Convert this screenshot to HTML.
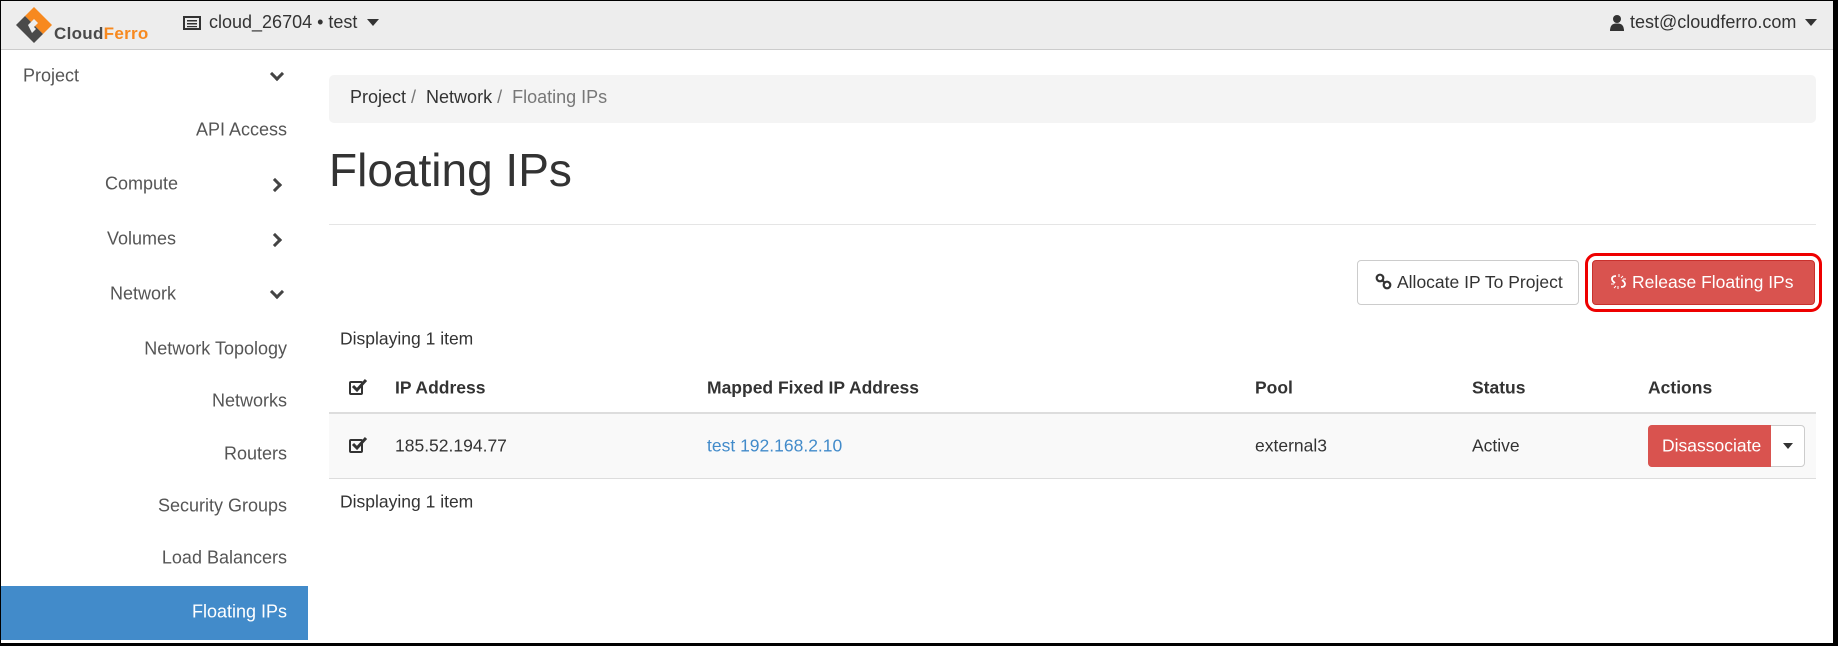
<!DOCTYPE html>
<html><head><meta charset="utf-8"><style>
*{margin:0;padding:0;box-sizing:border-box}
body{width:1838px;height:646px;overflow:hidden;background:#fff;font-family:"Liberation Sans",sans-serif;color:#333;position:relative}
.a{position:absolute;white-space:nowrap}
.frame{position:absolute;left:0;top:0;width:1838px;height:646px;border:1px solid #000;border-right:5px solid #000;border-bottom:3px solid #000;pointer-events:none}
.hdr{position:absolute;left:0;top:0;width:1838px;height:50px;background:#ededed;border-bottom:1px solid #ccc}
.sb{font-size:18px;color:#555;text-align:right;transform:translateY(-50%)}
.chev{position:absolute;width:10px;height:10px;border-right:3px solid #444;border-bottom:3px solid #444}
.t{font-size:17.5px;transform:translateY(-50%)}
.b{font-weight:bold}
.cb{position:absolute;width:14px;height:14px;border:2px solid #333;border-radius:2px}
</style></head><body>
<div class="hdr"></div>
<svg class="a" style="left:14px;top:5px" width="40" height="40" viewBox="0 0 40 40">
<polygon points="20,2 38,20 29,29 11,11" fill="#f7891f"/>
<polygon points="11,11 29,29 20,38 2,20" fill="#4a4a4a"/>
<polygon points="14,20 20,14 24,18 20,22 22,24 18,28" fill="#ededed"/>
</svg>
<div class="a" style="left:54px;top:24px;font-size:17px;font-weight:bold;color:#4a4a4a;letter-spacing:0.3px">Cloud<span style="color:#f7891f">Ferro</span></div>
<svg class="a" style="left:183px;top:16px" width="18" height="14" viewBox="0 0 18 14"><rect x="1" y="1" width="16" height="12" fill="none" stroke="#333" stroke-width="2"/><rect x="4" y="4" width="10" height="1.5" fill="#333"/><rect x="4" y="7" width="10" height="1.5" fill="#333"/><rect x="4" y="10" width="10" height="1.2" fill="#333"/></svg>
<div class="a" style="left:209px;top:12px;font-size:18px">cloud_26704 • test</div>
<svg class="a" style="left:367px;top:19px" width="12" height="8"><polygon points="0,0 12,0 6,7" fill="#333"/></svg>
<svg class="a" style="left:1610px;top:14px" width="14" height="17" viewBox="0 0 14 17"><circle cx="7" cy="5" r="4" fill="#333"/><path d="M0 17 Q0 9 7 9.5 Q14 9 14 17Z" fill="#333"/></svg>
<div class="a" style="left:1630px;top:12px;font-size:18px">test@cloudferro.com</div>
<svg class="a" style="left:1805px;top:19px" width="12" height="8"><polygon points="0,0 12,0 6,7" fill="#333"/></svg>

<div class="a sb" style="left:23px;top:76px;text-align:left">Project</div>
<div class="chev" style="left:272px;top:69px;transform:rotate(45deg)"></div>
<div class="a sb" style="right:1551px;top:130px">API Access</div>
<div class="a sb" style="right:1660px;top:184px">Compute</div>
<div class="chev" style="left:270px;top:180px;transform:rotate(-45deg)"></div>
<div class="a sb" style="right:1662px;top:239px">Volumes</div>
<div class="chev" style="left:270px;top:235px;transform:rotate(-45deg)"></div>
<div class="a sb" style="right:1662px;top:294px">Network</div>
<div class="chev" style="left:272px;top:287px;transform:rotate(45deg)"></div>
<div class="a sb" style="right:1551px;top:349px">Network Topology</div>
<div class="a sb" style="right:1551px;top:401px">Networks</div>
<div class="a sb" style="right:1551px;top:454px">Routers</div>
<div class="a sb" style="right:1551px;top:506px">Security Groups</div>
<div class="a sb" style="right:1551px;top:558px">Load Balancers</div>
<div class="a" style="left:0;top:586px;width:308px;height:54px;background:#428bca"></div>
<div class="a sb" style="right:1551px;top:612px;color:#fff">Floating IPs</div>

<div class="a" style="left:329px;top:75px;width:1487px;height:48px;background:#f4f4f4;border-radius:5px"></div>
<div class="a" style="left:350px;top:87px;font-size:18px;color:#333">Project <span style="color:#777">/</span>&nbsp; Network <span style="color:#777">/</span>&nbsp; <span style="color:#777">Floating IPs</span></div>
<div class="a" style="left:329px;top:144px;font-size:46px;line-height:52px;color:#333">Floating IPs</div>
<div class="a" style="left:329px;top:224px;width:1487px;height:1px;background:#e5e5e5"></div>

<div class="a" style="left:1357px;top:260px;width:222px;height:45px;border:1px solid #ccc;border-radius:4px;background:#fff"></div>
<svg class="a" style="left:1375px;top:273px" width="17" height="17" viewBox="0 0 17 17" fill="none" stroke="#333" stroke-width="2.2"><circle cx="5" cy="5" r="3.3"/><circle cx="12" cy="12" r="3.3"/><path d="M7 7 L10 10"/></svg>
<div class="a" style="left:1397px;top:272px;font-size:17.5px">Allocate IP To Project</div>
<div class="a" style="left:1585px;top:253px;width:237px;height:59px;border:3px solid #e00;border-radius:11px"></div>
<div class="a" style="left:1592px;top:260px;width:223px;height:45px;background:#d9534f;border:1px solid #c9302c;border-radius:4px"></div>
<svg class="a" style="left:1610px;top:273px" width="17" height="17" viewBox="0 0 17 17" fill="none" stroke="#fff" stroke-width="1.8"><path d="M6 3 Q2 3 2 6 Q2 8 5 10"/><path d="M11 14 Q15 14 15 11 Q15 9 12 7"/><path d="M9 1v3M13 3l-2 2M16 6h-3M1 11h3M4 15l2-2M8 16v-3" stroke-width="1"/></svg>
<div class="a" style="left:1632px;top:272px;font-size:17.5px;color:#fff">Release Floating IPs</div>

<div class="a t" style="left:340px;top:339px">Displaying 1 item</div>
<div class="a" style="left:329px;top:412px;width:1487px;height:2px;background:#ddd"></div>
<div class="a" style="left:329px;top:414px;width:1487px;height:65px;background:#f9f9f9;border-bottom:1px solid #ddd"></div>
<div class="cb" style="left:349px;top:381px"></div>
<div class="a t b" style="left:395px;top:388px">IP Address</div>
<div class="a t b" style="left:707px;top:388px">Mapped Fixed IP Address</div>
<div class="a t b" style="left:1255px;top:388px">Pool</div>
<div class="a t b" style="left:1472px;top:388px">Status</div>
<div class="a t b" style="left:1648px;top:388px">Actions</div>
<div class="cb" style="left:349px;top:439px"></div>
<svg class="a" style="left:349px;top:378px" width="20" height="16"><path d="M4 8 L8 12 L17 2" fill="none" stroke="#333" stroke-width="3"/></svg>
<svg class="a" style="left:349px;top:436px" width="20" height="16"><path d="M4 8 L8 12 L17 2" fill="none" stroke="#333" stroke-width="3"/></svg>
<div class="a t" style="left:395px;top:446px">185.52.194.77</div>
<div class="a t" style="left:707px;top:446px;color:#428bca">test 192.168.2.10</div>
<div class="a t" style="left:1255px;top:446px">external3</div>
<div class="a t" style="left:1472px;top:446px">Active</div>
<div class="a" style="left:1648px;top:425px;width:157px;height:42px;border:1px solid #ccc;border-radius:4px;background:#fff"></div>
<div class="a" style="left:1648px;top:425px;width:123px;height:42px;background:#d9534f;border-radius:4px 0 0 4px"></div>
<div class="a t" style="left:1662px;top:446px;color:#fff">Disassociate</div>
<svg class="a" style="left:1783px;top:443px" width="10" height="6"><polygon points="0,0 10,0 5,6" fill="#333"/></svg>
<div class="a t" style="left:340px;top:502px">Displaying 1 item</div>
<div class="frame"></div>
</body></html>
